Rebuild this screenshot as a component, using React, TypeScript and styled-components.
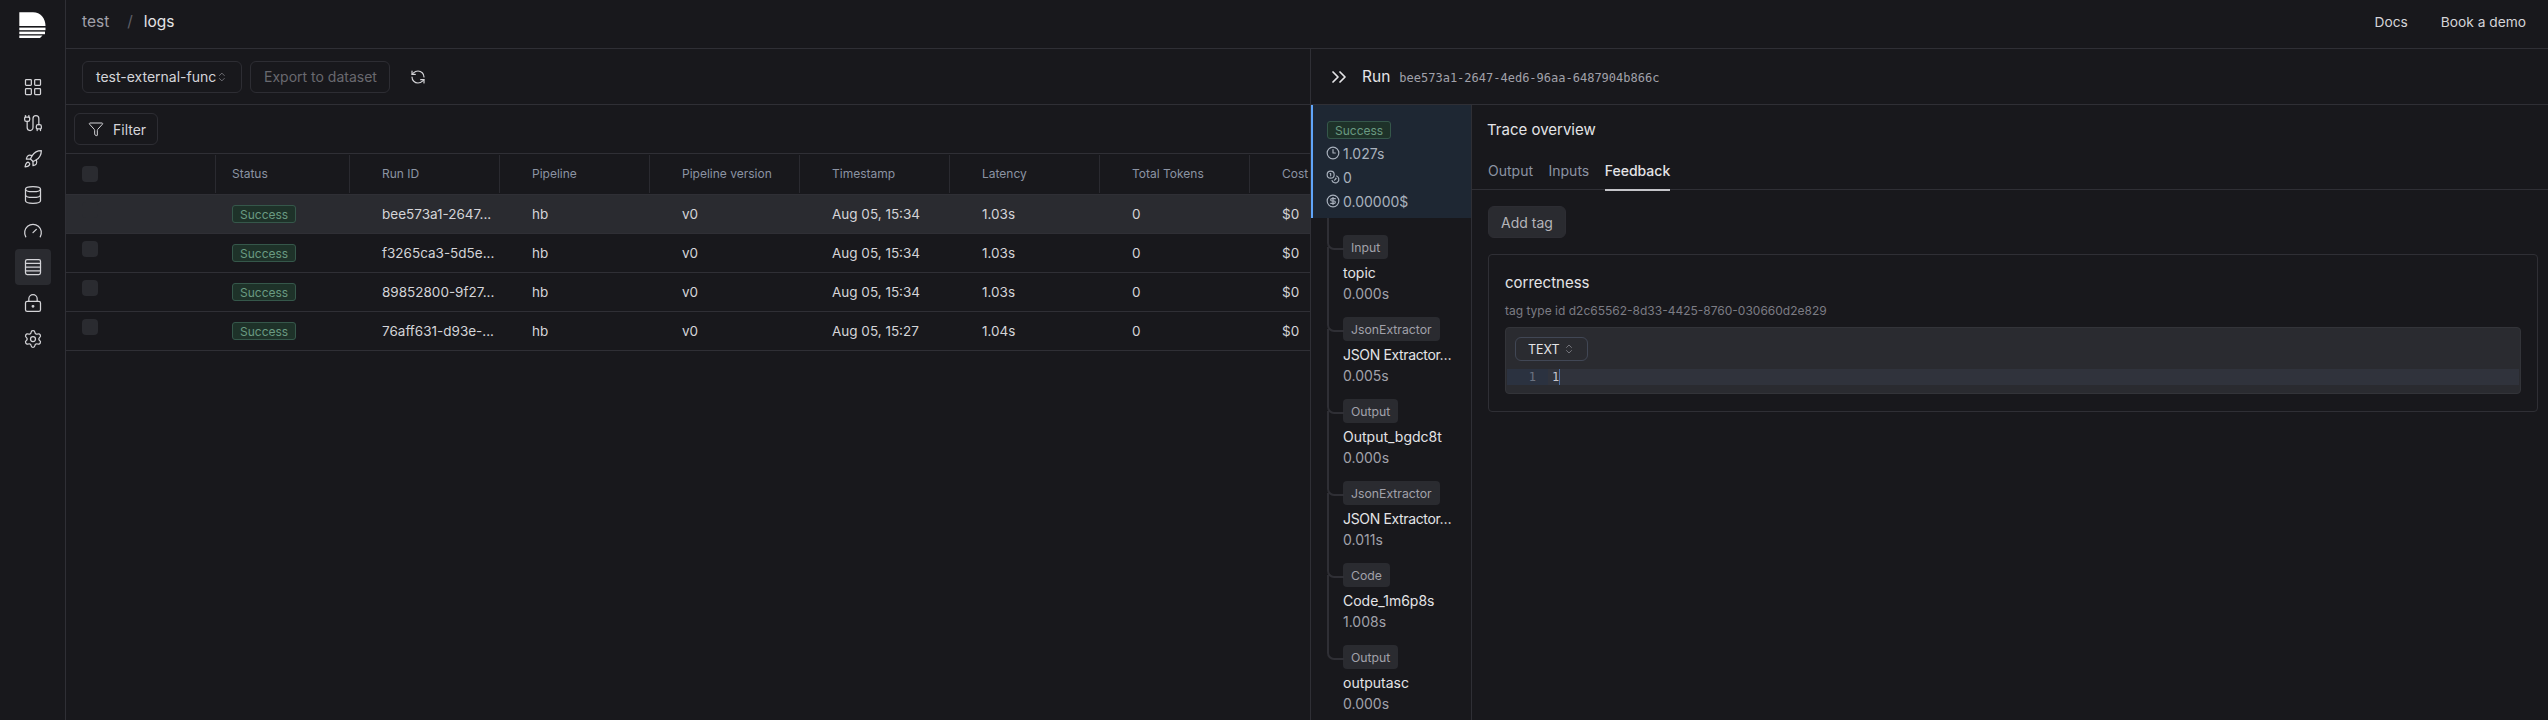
import React, { FC } from "react";
import styled, { createGlobalStyle } from "styled-components";
import {
  Cable,
  ChevronsRight,
  ChevronsUpDown,
  CircleDollarSign,
  Clock3,
  Coins,
  Database,
  Filter,
  Gauge,
  LayoutGrid,
  LockKeyhole,
  RefreshCcw,
  Rocket,
  Rows4,
  Settings,
} from "lucide-react";

const GlobalStyle = createGlobalStyle`
  html, body {
    margin: 0;
    height: 100%;
    overflow: hidden;
    background: #18181c;
  }
  * {
    box-sizing: border-box;
  }
`;

const Page = styled.div`
  display: flex;
  width: 2548px;
  height: 720px;
  overflow: hidden;
  background: #18181c;
  color: #e4e4e7;
  font-family: Inter, "Liberation Sans", sans-serif;
  font-size: 14px;
`;

const Sidebar = styled.nav`
  display: flex;
  flex: none;
  flex-direction: column;
  align-items: center;
  width: 66px;
  padding-top: 12px;
  border-right: 1px solid #2f2f35;
`;

const LogoMark = styled.svg`
  display: block;
  width: 27px;
  height: 27px;
  margin-bottom: 30px;
`;

const NavItem = styled.div<{ $active?: boolean }>`
  display: flex;
  align-items: center;
  justify-content: center;
  width: 36px;
  height: 36px;
  border-radius: 4px;
  color: #d4d4d8;
  background: ${({ $active }) => ($active ? "#2a2b30" : "transparent")};
`;

const Main = styled.div`
  display: flex;
  flex: 1;
  min-width: 0;
  flex-direction: column;
`;

const TopBar = styled.header`
  display: flex;
  flex: none;
  align-items: center;
  justify-content: space-between;
  height: 49px;
  padding: 0 22px 5px 16px;
  border-bottom: 1px solid #2f2f35;
`;

const Breadcrumb = styled.div`
  display: flex;
  align-items: center;
  font-size: 15.5px;
  color: #a1a1aa;
`;

const Slash = styled.span`
  margin: 0 11px 0 18px;
  color: #5f5f66;
`;

const CurrentCrumb = styled.span`
  color: #e4e4e7;
`;

const TopLinks = styled.div`
  display: flex;
  gap: 33px;
  color: #d4d4d8;
  font-size: 13.75px;
`;

const Workspace = styled.div`
  display: flex;
  flex: 1;
  min-height: 0;
`;

const LogsPane = styled.section`
  display: flex;
  flex: none;
  flex-direction: column;
  width: 1244px;
  overflow: hidden;
`;

const Toolbar = styled.div`
  display: flex;
  flex: none;
  align-items: center;
  gap: 8px;
  height: 56px;
  padding: 0 16px;
  border-bottom: 1px solid #2f2f35;
`;

const Control = styled.div<{ $width: number; $disabled?: boolean }>`
  display: flex;
  align-items: center;
  justify-content: space-between;
  width: ${({ $width }) => $width}px;
  height: 32px;
  padding: 0 13px;
  border: 1px solid #2d2d33;
  border-radius: 6px;
  white-space: nowrap;
  color: ${({ $disabled }) => ($disabled ? "#69696f" : "#d4d4d8")};
`;

const IconSlot = styled.span`
  display: flex;
  margin-left: 12px;
  color: #d4d4d8;
`;

const FilterRow = styled.div`
  display: flex;
  flex: none;
  align-items: center;
  height: 49px;
  padding: 0 8px;
  border-bottom: 1px solid #2f2f35;
`;

const FilterButton = styled.div`
  display: flex;
  align-items: center;
  gap: 9px;
  width: 84px;
  height: 32px;
  padding-left: 13px;
  border: 1px solid #2d2d33;
  border-radius: 6px;
  color: #d4d4d8;
`;

const HeaderRow = styled.div`
  display: flex;
  flex: none;
  height: 41px;
  padding: 1px 0;
  border-bottom: 1px solid #2f2f35;
`;

const BodyRow = styled.div<{ $selected?: boolean }>`
  display: flex;
  flex: none;
  height: 39px;
  border-bottom: 1px solid #2f2f35;
  background: ${({ $selected }) => ($selected ? "#2a2b30" : "transparent")};
`;

const Cell = styled.div<{ $width: number; $pad: number }>`
  display: flex;
  flex: none;
  align-items: center;
  width: ${({ $width }) => $width}px;
  padding-left: ${({ $pad }) => $pad}px;
  white-space: nowrap;
  color: #d4d4d8;
  font-size: 13.5px;
`;

const HeaderCell = styled(Cell)`
  padding-bottom: 2px;
  border-right: 1px solid #2a2a30;
  color: #8b93a3;
  font-size: 12px;
`;

const Checkbox = styled.span<{ $top?: boolean }>`
  display: block;
  width: 16px;
  height: 16px;
  border-radius: 4px;
  background: #2a2b30;
  align-self: ${({ $top }) => ($top ? "flex-start" : "center")};
  margin-top: ${({ $top }) => ($top ? "7px" : "2px")};
`;

const StatusBadge = styled.span`
  display: inline-flex;
  align-items: center;
  height: 18px;
  padding: 0 7px;
  border: 1px solid #35574a;
  border-radius: 3px;
  background: #1e3229;
  color: #6a9a82;
  font-size: 12px;
`;

const RunPane = styled.aside`
  display: flex;
  flex: 1;
  min-width: 0;
  flex-direction: column;
  border-left: 1px solid #2f2f35;
`;

const RunHeader = styled.div`
  display: flex;
  flex: none;
  align-items: center;
  height: 56px;
  padding-left: 16px;
  border-bottom: 1px solid #2f2f35;
`;

const RunTitle = styled.span`
  margin-left: 11px;
  font-size: 15.5px;
  color: #e4e4e7;
`;

const RunId = styled.span`
  margin-left: 9px;
  padding-top: 2px;
  color: #a1a1aa;
  font-family: "DejaVu Sans Mono", "Liberation Mono", monospace;
  font-size: 12px;
`;

const RunBody = styled.div`
  display: flex;
  flex: 1;
  min-height: 0;
`;

const Timeline = styled.div`
  flex: none;
  width: 161px;
  overflow: hidden;
  border-right: 1px solid #2f2f35;
`;

const RootSpan = styled.div`
  display: flex;
  flex-direction: column;
  height: 113px;
  padding: 16px 0 0 14px;
  border-left: 2px solid #60a5fa;
  background: #1e2733;
`;

const BadgeLine = styled.div`
  display: flex;
`;

const Metric = styled.div`
  display: flex;
  align-items: center;
  gap: 3px;
  height: 24px;
  margin-left: -1px;
  color: #a9b1bd;
  white-space: nowrap;
`;

const MetricList = styled.div`
  display: flex;
  flex-direction: column;
  margin-top: 2px;
`;

const SpanList = styled.div`
  display: flex;
  flex-direction: column;
  padding: 17px 0 0 32px;
`;

const SpanItem = styled.div<{ $first?: boolean }>`
  position: relative;
  height: 82px;

  &::before {
    content: "";
    position: absolute;
    left: -16px;
    top: ${({ $first }) => ($first ? "-17px" : "-70px")};
    width: 15px;
    height: ${({ $first }) => ($first ? "30px" : "83px")};
    border-left: 2px solid #2f2f35;
    border-bottom: 2px solid #2f2f35;
    border-bottom-left-radius: 7px;
  }
`;

const SpanTag = styled.span`
  display: inline-flex;
  align-items: center;
  height: 24px;
  padding: 0 8px;
  border-radius: 4px;
  background: #2a2b30;
  color: #a1a1aa;
  font-size: 12.25px;
`;

const SpanName = styled.div<{ $tight?: boolean }>`
  margin-top: 2px;
  line-height: 24px;
  color: #e4e4e7;
  white-space: nowrap;
  letter-spacing: ${({ $tight }) => ($tight ? "-0.35px" : "0")};
`;

const SpanTime = styled.div`
  line-height: 18px;
  color: #a1a1aa;
`;

const Detail = styled.div`
  display: flex;
  flex: 1;
  min-width: 0;
  flex-direction: column;
`;

const DetailTitle = styled.div`
  padding: 14px 15px 0;
  line-height: 21px;
  font-size: 15px;
  color: #e4e4e7;
`;

const TabBar = styled.div`
  display: flex;
  gap: 15.5px;
  height: 50px;
  padding: 0 16px;
  border-bottom: 1px solid #2f2f35;
`;

const Tab = styled.div<{ $active?: boolean }>`
  display: flex;
  align-items: flex-end;
  height: 51px;
  padding: 0 0 10px;
  border-bottom: 2px solid ${({ $active }) => ($active ? "#c4c4c9" : "transparent")};
  color: ${({ $active }) => ($active ? "#e4e4e7" : "#8b93a3")};
  font-weight: ${({ $active }) => ($active ? 500 : 400)};
`;

const TagSection = styled.div`
  display: flex;
  flex-direction: column;
  align-items: flex-start;
  padding: 16px 10px 0 16px;
`;

const AddTag = styled.div`
  display: flex;
  align-items: center;
  height: 32px;
  padding: 0 12px;
  border: 1px solid #2d2d33;
  border-radius: 6px;
  background: #2a2b30;
  color: #b4b4ba;
`;

const TagCard = styled.div`
  align-self: stretch;
  height: 158px;
  margin-top: 16px;
  padding: 16px;
  border: 1px solid #2f2f35;
  border-radius: 4px;
`;

const TagName = styled.div`
  line-height: 24px;
  font-size: 15px;
  color: #e4e4e7;
`;

const TagTypeId = styled.div`
  margin-top: 7px;
  line-height: 18px;
  font-size: 12px;
  color: #7c7c84;
`;

const Editor = styled.div`
  height: 67px;
  margin-top: 7px;
  padding: 1px;
  border: 1px solid #333439;
  border-radius: 4px;
  background: #2a2b30;
`;

const EditorBar = styled.div`
  display: flex;
  align-items: center;
  height: 40px;
  padding-left: 8px;
`;

const ModeSelect = styled.div`
  display: flex;
  align-items: center;
  gap: 3px;
  width: 73px;
  height: 24px;
  padding-left: 12px;
  border: 1px solid #414755;
  border-radius: 6px;
  font-size: 12.5px;
  color: #e4e4e7;
`;

const CodeLine = styled.div`
  display: flex;
  height: 16px;
  background: #30333c;
  font-family: "DejaVu Sans Mono", "Liberation Mono", monospace;
  font-size: 12px;
  line-height: 16px;
`;

const Gutter = styled.span`
  flex: none;
  width: 41px;
  padding-right: 12px;
  text-align: right;
  background: #2b3240;
  color: #6b7280;
`;

const CodeText = styled.span`
  margin-left: 4px;
  border-right: 1px solid #4a6fa5;
  color: #c8c8ce;
`;

const navIcons = [LayoutGrid, Cable, Rocket, Database, Gauge, Rows4, LockKeyhole, Settings];

const columns = [
  { label: "", width: 150, pad: 16 },
  { label: "Status", width: 134, pad: 16 },
  { label: "Run ID", width: 150, pad: 32 },
  { label: "Pipeline", width: 150, pad: 32 },
  { label: "Pipeline version", width: 150, pad: 32 },
  { label: "Timestamp", width: 150, pad: 32 },
  { label: "Latency", width: 150, pad: 32 },
  { label: "Total Tokens", width: 150, pad: 32 },
  { label: "Cost", width: 150, pad: 32 },
];

const runs = [
  { id: "bee573a1-2647...", time: "Aug 05, 15:34", latency: "1.03s" },
  { id: "f3265ca3-5d5e...", time: "Aug 05, 15:34", latency: "1.03s" },
  { id: "89852800-9f27...", time: "Aug 05, 15:34", latency: "1.03s" },
  { id: "76aff631-d93e-...", time: "Aug 05, 15:27", latency: "1.04s" },
];

const spans = [
  { tag: "Input", name: "topic", time: "0.000s" },
  { tag: "JsonExtractor", name: "JSON Extractor…", time: "0.005s" },
  { tag: "Output", name: "Output_bgdc8t", time: "0.000s" },
  { tag: "JsonExtractor", name: "JSON Extractor…", time: "0.011s" },
  { tag: "Code", name: "Code_1m6p8s", time: "1.008s" },
  { tag: "Output", name: "outputasc", time: "0.000s" },
];

const Logo: FC = () => (
  <LogoMark viewBox="0 0 27 27" fill="#ffffff">
    <path d="M0.3 0.3H14C21.5 0.3 26.5 6.5 26.5 14H0.3Z" />
    <path d="M0.3 15.6H26.5V18.2H0.3Z" />
    <path d="M0.3 19.6H26V22.2H0.3Z" />
    <path d="M0.3 23.6H23.5L21 26H0.3Z" />
  </LogoMark>
);

const App: FC = () => {
  return (
    <Page>
      <GlobalStyle />
      <Sidebar>
        <Logo />
        {navIcons.map((Icon, index) => (
          <NavItem key={index} $active={index === 5}>
            <Icon size={20} strokeWidth={1.5} />
          </NavItem>
        ))}
      </Sidebar>
      <Main>
        <TopBar>
          <Breadcrumb>
            <span>test</span>
            <Slash>/</Slash>
            <CurrentCrumb>logs</CurrentCrumb>
          </Breadcrumb>
          <TopLinks>
            <span>Docs</span>
            <span>Book a demo</span>
          </TopLinks>
        </TopBar>
        <Workspace>
          <LogsPane>
            <Toolbar>
              <Control $width={160}>
                test-external-func
                <ChevronsUpDown size={12} strokeWidth={1.5} color="#8b8b92" />
              </Control>
              <Control $width={140} $disabled>
                Export to dataset
              </Control>
              <IconSlot>
                <RefreshCcw size={16} strokeWidth={1.75} />
              </IconSlot>
            </Toolbar>
            <FilterRow>
              <FilterButton>
                <Filter size={16} strokeWidth={1.5} />
                Filter
              </FilterButton>
            </FilterRow>
            <HeaderRow>
              {columns.map((column, index) => (
                <HeaderCell key={index} $width={column.width} $pad={column.pad}>
                  {index === 0 ? <Checkbox /> : column.label}
                </HeaderCell>
              ))}
            </HeaderRow>
            {runs.map((run, index) => (
              <BodyRow key={run.id} $selected={index === 0}>
                <Cell $width={150} $pad={16}>
                  <Checkbox $top />
                </Cell>
                <Cell $width={134} $pad={16}>
                  <StatusBadge>Success</StatusBadge>
                </Cell>
                <Cell $width={150} $pad={32}>{run.id}</Cell>
                <Cell $width={150} $pad={32}>hb</Cell>
                <Cell $width={150} $pad={32}>v0</Cell>
                <Cell $width={150} $pad={32}>{run.time}</Cell>
                <Cell $width={150} $pad={32}>{run.latency}</Cell>
                <Cell $width={150} $pad={32}>0</Cell>
                <Cell $width={150} $pad={32}>$0</Cell>
              </BodyRow>
            ))}
          </LogsPane>
          <RunPane>
            <RunHeader>
              <ChevronsRight size={24} strokeWidth={1.75} />
              <RunTitle>Run</RunTitle>
              <RunId>bee573a1-2647-4ed6-96aa-6487904b866c</RunId>
            </RunHeader>
            <RunBody>
              <Timeline>
                <RootSpan>
                  <BadgeLine>
                    <StatusBadge>Success</StatusBadge>
                  </BadgeLine>
                  <MetricList>
                    <Metric>
                      <Clock3 size={14} strokeWidth={2} />
                      1.027s
                    </Metric>
                    <Metric>
                      <Coins size={14} strokeWidth={2} />
                      0
                    </Metric>
                    <Metric>
                      <CircleDollarSign size={14} strokeWidth={2} />
                      0.00000$
                    </Metric>
                  </MetricList>
                </RootSpan>
                <SpanList>
                  {spans.map((span, index) => (
                    <SpanItem key={index} $first={index === 0}>
                      <SpanTag>{span.tag}</SpanTag>
                      <SpanName $tight={span.name.endsWith("…")}>{span.name}</SpanName>
                      <SpanTime>{span.time}</SpanTime>
                    </SpanItem>
                  ))}
                </SpanList>
              </Timeline>
              <Detail>
                <DetailTitle>Trace overview</DetailTitle>
                <TabBar>
                  <Tab>Output</Tab>
                  <Tab>Inputs</Tab>
                  <Tab $active>Feedback</Tab>
                </TabBar>
                <TagSection>
                  <AddTag>Add tag</AddTag>
                  <TagCard>
                    <TagName>correctness</TagName>
                    <TagTypeId>tag type id d2c65562-8d33-4425-8760-030660d2e829</TagTypeId>
                    <Editor>
                      <EditorBar>
                        <ModeSelect>
                          TEXT
                          <ChevronsUpDown size={12} strokeWidth={1.5} color="#8b8b92" />
                        </ModeSelect>
                      </EditorBar>
                      <CodeLine>
                        <Gutter>1</Gutter>
                        <CodeText>1</CodeText>
                      </CodeLine>
                    </Editor>
                  </TagCard>
                </TagSection>
              </Detail>
            </RunBody>
          </RunPane>
        </Workspace>
      </Main>
    </Page>
  );
};

export default App;
